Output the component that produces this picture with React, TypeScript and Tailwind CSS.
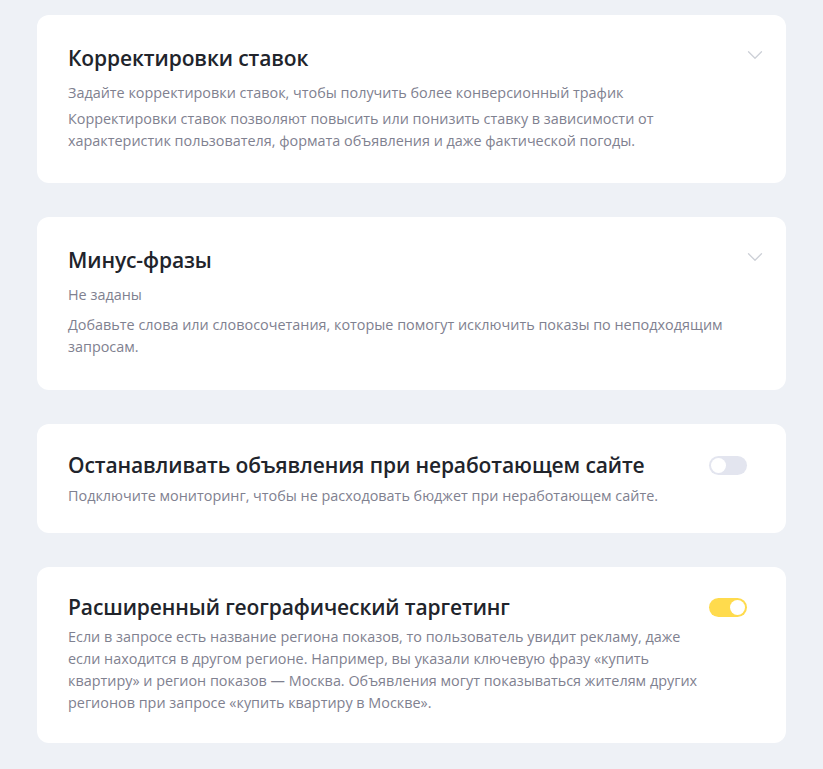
import { ChevronDown } from "lucide-react";

const font = { fontFamily: '"Open Sans", "Noto Sans", sans-serif' };

function Card({ children, pt = "pt-[29px]", pb = "pb-[30px]" }: { children: React.ReactNode; pt?: string; pb?: string }) {
  return <section className={`relative bg-white rounded-[12px] px-[31px] ${pt} ${pb}`}>{children}</section>;
}

function Title({ children }: { children: React.ReactNode }) {
  return <h2 className="text-[21px] leading-[28px] font-semibold text-[#21242b] tracking-[-0.1px]">{children}</h2>;
}

function Chevron() {
  return <ChevronDown size={26} strokeWidth={1.2} className="absolute right-[18px] top-[27px] text-[#cdd0d7]" />;
}

function Toggle({ on }: { on: boolean }) {
  return (
    <div
      className={`absolute right-[39px] w-[38px] h-[19px] rounded-full p-[2px] flex ${
        on ? "bg-[#ffdb4d] justify-end" : "bg-[#e3e5ef] justify-start"
      }`}
    >
      <div className="w-[15px] h-[15px] rounded-full bg-white" />
    </div>
  );
}

const body = "text-[14.4px] leading-[22px] text-[#7f8190]";

export default function App() {
  return (
    <main className="min-h-[769px] bg-[#eef1f6] px-[37px] pt-[15px] pb-[27px] flex flex-col gap-[34px]" style={font}>
      <Card pb="pb-[31px]">
        <Chevron />
        <Title>Корректировки ставок</Title>
        <p className={`mt-[10px] ${body}`}>
          Задайте корректировки ставок, чтобы получить более конверсионный трафик
        </p>
        <p className={`mt-[4px] ${body} max-w-[620px]`}>
          Корректировки ставок позволяют повысить или понизить ставку в зависимости от характеристик пользователя, формата объявления и даже фактической погоды.
        </p>
      </Card>

      <Card pt="pt-[29px]" pb="pb-[32px]">
        <Chevron />
        <Title>Минус-фразы</Title>
        <p className={`mt-[10px] ${body}`}>Не заданы</p>
        <p className={`mt-[8px] ${body} max-w-[670px]`}>
          Добавьте слова или словосочетания, которые помогут исключить показы по неподходящим запросам.
        </p>
      </Card>

      <Card pt="pt-[27px]" pb="pb-[26px]">
        <div className="flex items-center">
          <Title>Останавливать объявления при неработающем сайте</Title>
          <Toggle on={false} />
        </div>
        <p className={`mt-[6px] ${body}`}>
          Подключите мониторинг, чтобы не расходовать бюджет при неработающем сайте.
        </p>
      </Card>

      <Card pt="pt-[26px]" pb="pb-[29px]">
        <div className="flex items-center">
          <Title>Расширенный географический таргетинг</Title>
          <Toggle on={true} />
        </div>
        <p className={`mt-[5px] ${body} max-w-[645px]`}>
          Если в запросе есть название региона показов, то пользователь увидит рекламу, даже если находится в другом регионе. Например, вы указали ключевую фразу «купить квартиру» и регион показов — Москва. Объявления могут показываться жителям других регионов при запросе «купить квартиру в Москве».
        </p>
      </Card>
    </main>
  );
}
